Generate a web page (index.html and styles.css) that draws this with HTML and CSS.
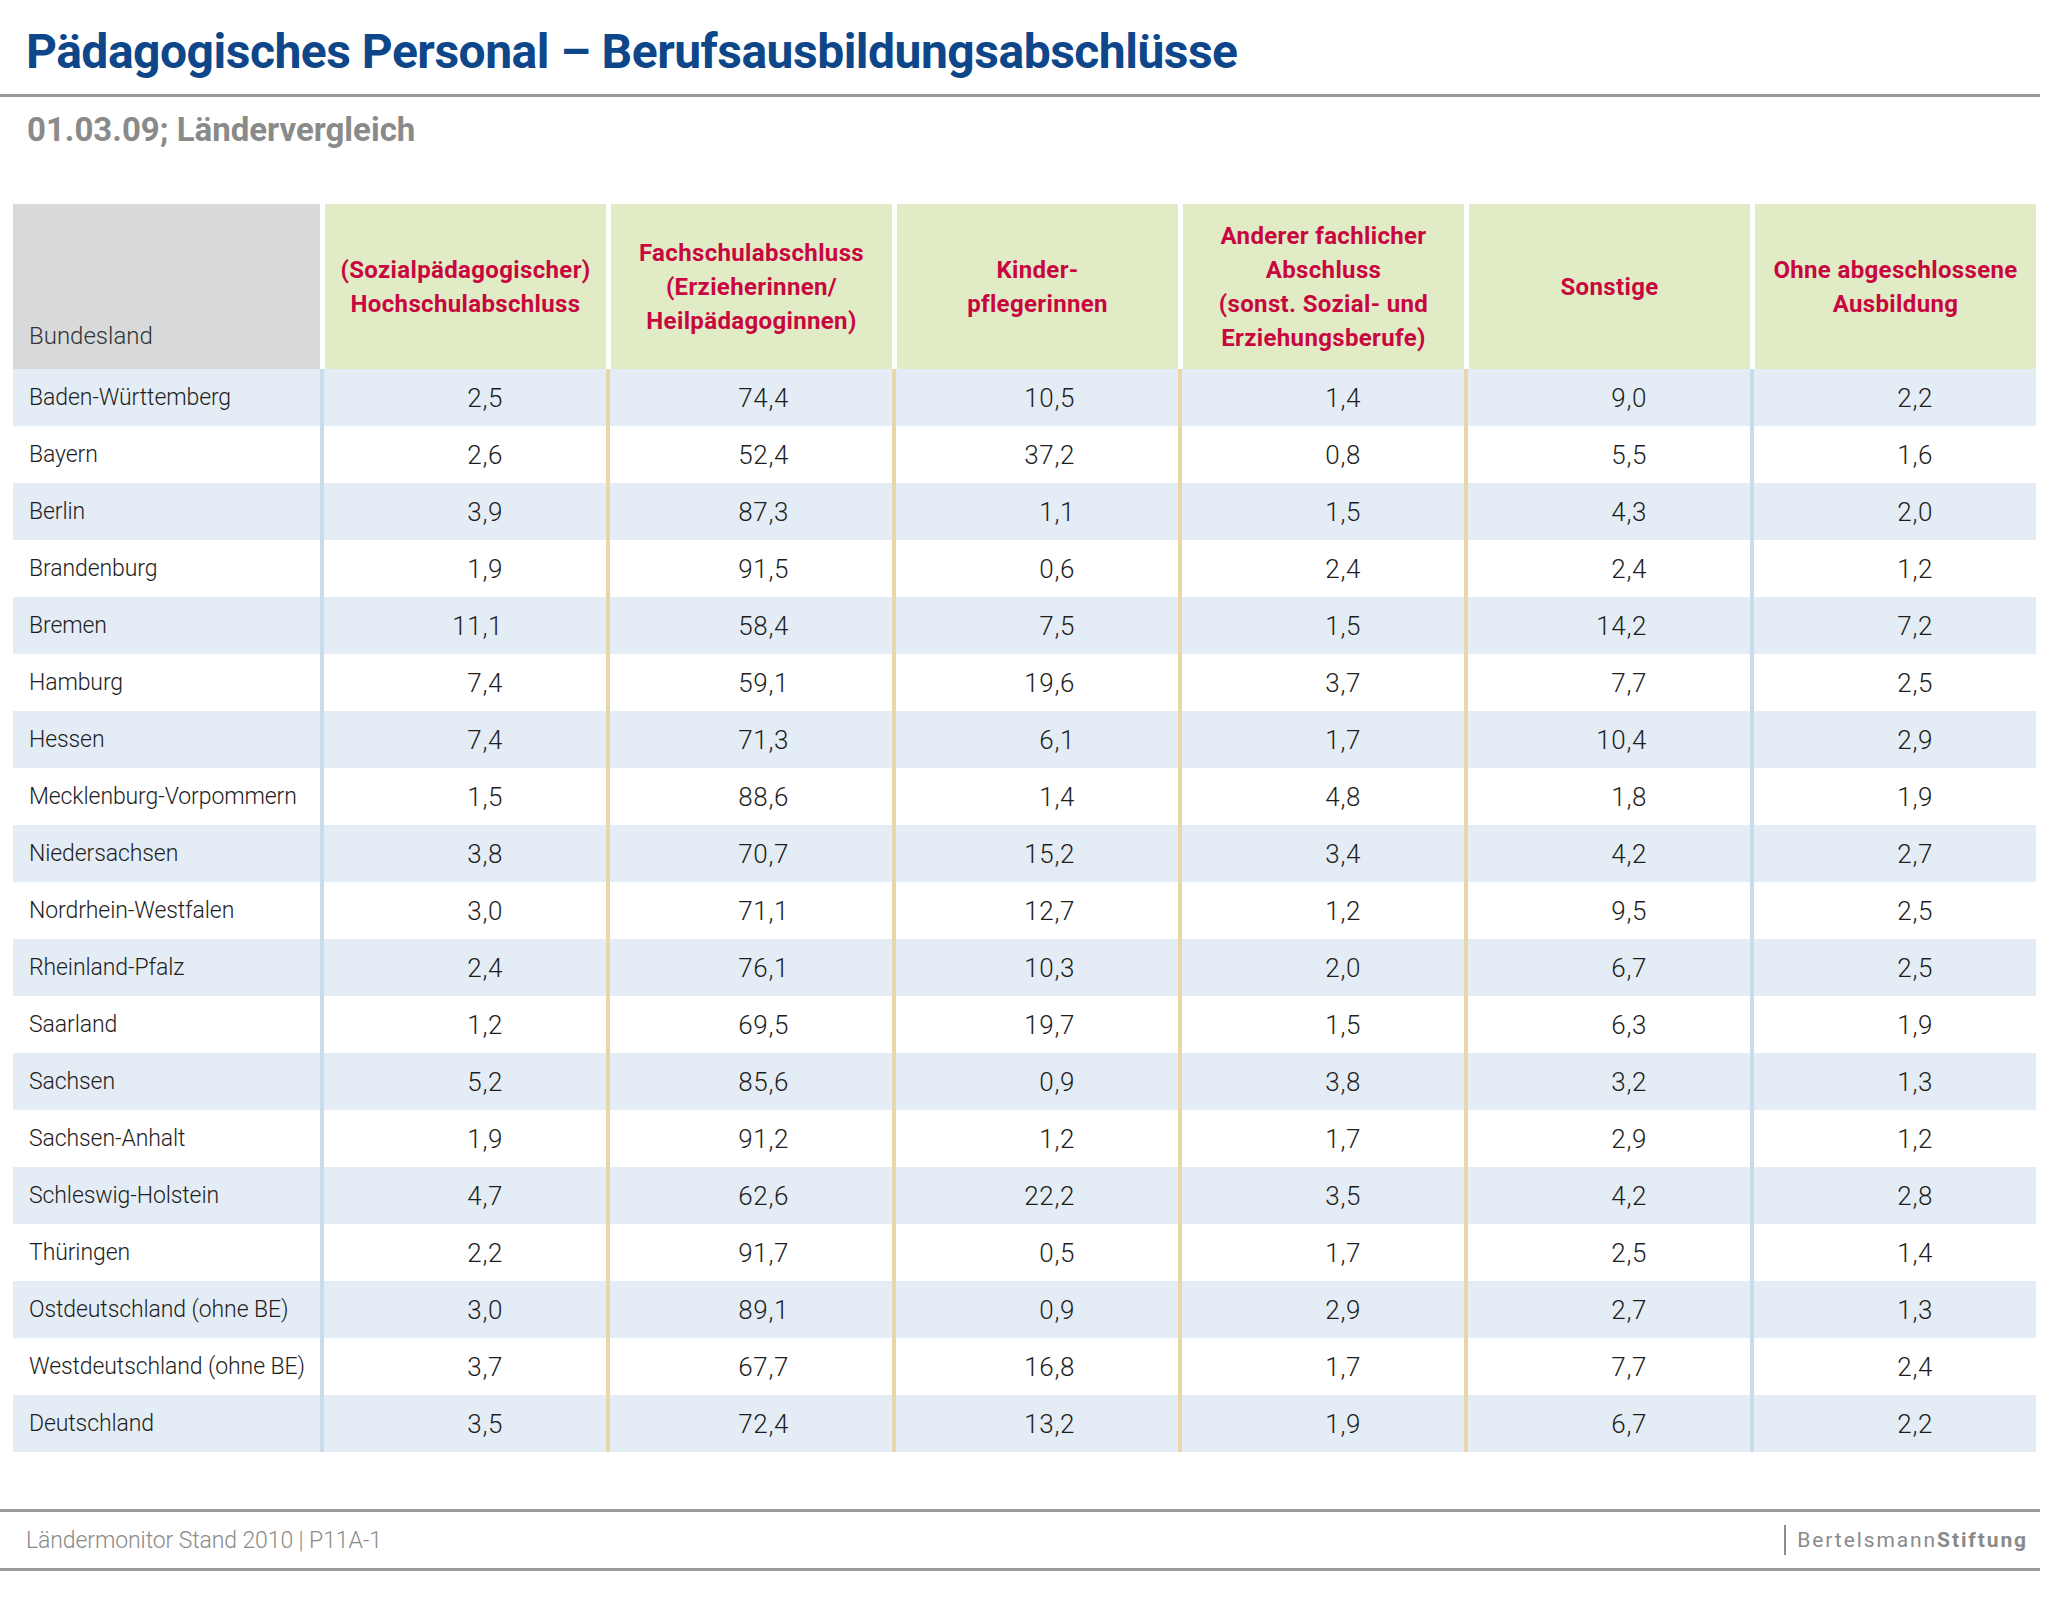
FILE: index.html
```html
<!DOCTYPE html>
<html lang="de">
<head>
<meta charset="utf-8">
<title>Pädagogisches Personal – Berufsausbildungsabschlüsse</title>
<link rel="stylesheet" href="styles.css">
</head>
<body>
<div class="page">
  <header class="head">
    <h1 class="title">Pädagogisches Personal – Berufsausbildungsabschlüsse</h1>
    <div class="rule"></div>
    <p class="subtitle">01.03.09; Ländervergleich</p>
  </header>

  <div class="table">
    <div class="hrow">
      <div class="hcell first"><span>Bundesland</span></div>
      <div class="hcell">(Sozialpädagogischer)<br>Hochschulabschluss</div>
      <div class="hcell">Fachschulabschluss<br>(Erzieherinnen/<br>Heilpädagoginnen)</div>
      <div class="hcell">Kinder-<br>pflegerinnen</div>
      <div class="hcell">Anderer fachlicher<br>Abschluss<br>(sonst. Sozial- und<br>Erziehungsberufe)</div>
      <div class="hcell">Sonstige</div>
      <div class="hcell">Ohne abgeschlossene<br>Ausbildung</div>
    </div>
    <div class="rows" id="rows">
      <div class="row"><div class="lbl">Baden-Württemberg</div><div class="num b">2,5</div><div class="num t">74,4</div><div class="num t">10,5</div><div class="num t">1,4</div><div class="num t">9,0</div><div class="num b">2,2</div></div>
      <div class="row"><div class="lbl">Bayern</div><div class="num b">2,6</div><div class="num t">52,4</div><div class="num t">37,2</div><div class="num t">0,8</div><div class="num t">5,5</div><div class="num b">1,6</div></div>
      <div class="row"><div class="lbl">Berlin</div><div class="num b">3,9</div><div class="num t">87,3</div><div class="num t">1,1</div><div class="num t">1,5</div><div class="num t">4,3</div><div class="num b">2,0</div></div>
      <div class="row"><div class="lbl">Brandenburg</div><div class="num b">1,9</div><div class="num t">91,5</div><div class="num t">0,6</div><div class="num t">2,4</div><div class="num t">2,4</div><div class="num b">1,2</div></div>
      <div class="row"><div class="lbl">Bremen</div><div class="num b">11,1</div><div class="num t">58,4</div><div class="num t">7,5</div><div class="num t">1,5</div><div class="num t">14,2</div><div class="num b">7,2</div></div>
      <div class="row"><div class="lbl">Hamburg</div><div class="num b">7,4</div><div class="num t">59,1</div><div class="num t">19,6</div><div class="num t">3,7</div><div class="num t">7,7</div><div class="num b">2,5</div></div>
      <div class="row"><div class="lbl">Hessen</div><div class="num b">7,4</div><div class="num t">71,3</div><div class="num t">6,1</div><div class="num t">1,7</div><div class="num t">10,4</div><div class="num b">2,9</div></div>
      <div class="row"><div class="lbl">Mecklenburg-Vorpommern</div><div class="num b">1,5</div><div class="num t">88,6</div><div class="num t">1,4</div><div class="num t">4,8</div><div class="num t">1,8</div><div class="num b">1,9</div></div>
      <div class="row"><div class="lbl">Niedersachsen</div><div class="num b">3,8</div><div class="num t">70,7</div><div class="num t">15,2</div><div class="num t">3,4</div><div class="num t">4,2</div><div class="num b">2,7</div></div>
      <div class="row"><div class="lbl">Nordrhein-Westfalen</div><div class="num b">3,0</div><div class="num t">71,1</div><div class="num t">12,7</div><div class="num t">1,2</div><div class="num t">9,5</div><div class="num b">2,5</div></div>
      <div class="row"><div class="lbl">Rheinland-Pfalz</div><div class="num b">2,4</div><div class="num t">76,1</div><div class="num t">10,3</div><div class="num t">2,0</div><div class="num t">6,7</div><div class="num b">2,5</div></div>
      <div class="row"><div class="lbl">Saarland</div><div class="num b">1,2</div><div class="num t">69,5</div><div class="num t">19,7</div><div class="num t">1,5</div><div class="num t">6,3</div><div class="num b">1,9</div></div>
      <div class="row"><div class="lbl">Sachsen</div><div class="num b">5,2</div><div class="num t">85,6</div><div class="num t">0,9</div><div class="num t">3,8</div><div class="num t">3,2</div><div class="num b">1,3</div></div>
      <div class="row"><div class="lbl">Sachsen-Anhalt</div><div class="num b">1,9</div><div class="num t">91,2</div><div class="num t">1,2</div><div class="num t">1,7</div><div class="num t">2,9</div><div class="num b">1,2</div></div>
      <div class="row"><div class="lbl">Schleswig-Holstein</div><div class="num b">4,7</div><div class="num t">62,6</div><div class="num t">22,2</div><div class="num t">3,5</div><div class="num t">4,2</div><div class="num b">2,8</div></div>
      <div class="row"><div class="lbl">Thüringen</div><div class="num b">2,2</div><div class="num t">91,7</div><div class="num t">0,5</div><div class="num t">1,7</div><div class="num t">2,5</div><div class="num b">1,4</div></div>
      <div class="row"><div class="lbl">Ostdeutschland (ohne BE)</div><div class="num b">3,0</div><div class="num t">89,1</div><div class="num t">0,9</div><div class="num t">2,9</div><div class="num t">2,7</div><div class="num b">1,3</div></div>
      <div class="row"><div class="lbl">Westdeutschland (ohne BE)</div><div class="num b">3,7</div><div class="num t">67,7</div><div class="num t">16,8</div><div class="num t">1,7</div><div class="num t">7,7</div><div class="num b">2,4</div></div>
      <div class="row"><div class="lbl">Deutschland</div><div class="num b">3,5</div><div class="num t">72,4</div><div class="num t">13,2</div><div class="num t">1,9</div><div class="num t">6,7</div><div class="num b">2,2</div></div>
    </div>
  </div>

  <footer class="foot">
    <span class="source">Ländermonitor Stand 2010 | P11A-1</span>
    <span class="logo"><span class="bar"></span><span class="brand">Bertelsmann<b>Stiftung</b></span></span>
  </footer>
</div>
</body>
</html>
```

FILE: styles.css
```css
* { box-sizing: border-box; }

html, body {
  margin: 0;
  padding: 0;
  background: #ffffff;
}

body {
  font-family: Roboto, "Liberation Sans", sans-serif;
  color: #222;
}

.page {
  width: 2067px;
  height: 1600px;
}

.head {
  padding-top: 24px;
}

.title {
  margin: 0 0 0 26px;
  font-size: 48px;
  line-height: 56px;
  font-weight: 700;
  letter-spacing: -0.5px;
  color: #0d4789;
}

.rule {
  width: 2040px;
  height: 3px;
  margin-top: 14px;
  background: #999;
}

.subtitle {
  margin: 14px 0 0 27px;
  font-size: 33px;
  line-height: 38px;
  font-weight: 700;
  letter-spacing: 0;
  color: #8a8a8a;
}

.table {
  margin: 55px 0 0 13px;
  width: 2023px;
}

.hrow {
  display: flex;
  height: 165px;
}

.hcell {
  width: 286px;
  border-left: 5px solid #fff;
  background: #e1ebc6;
  display: flex;
  align-items: center;
  justify-content: center;
  text-align: center;
  font-size: 24px;
  line-height: 34px;
  font-weight: 700;
  letter-spacing: 0.35px;
  color: #c8073f;
}

.hcell.first {
  width: 307px;
  border-left: 0;
  background: #d8d9db;
  justify-content: flex-start;
  align-items: flex-end;
  padding: 0 0 18px 16px;
  font-size: 24px;
  line-height: 30px;
  font-weight: 300;
  letter-spacing: 0;
  color: #333;
  text-align: left;
}

.row {
  display: flex;
  height: 57px;
  align-items: stretch;
}

.row:nth-child(odd) {
  background: #e4edf5;
}

.lbl {
  width: 307px;
  padding-left: 16px;
  display: flex;
  align-items: center;
  font-size: 23px;
  font-weight: 300;
  letter-spacing: -0.1px;
  color: #1e1e1e;
}

.num {
  width: 286px;
  border-left: 4px solid #e9d6a9;
  padding-right: 103px;
  display: flex;
  align-items: center;
  justify-content: flex-end;
  font-size: 26px;
  font-weight: 300;
  letter-spacing: 0.6px;
  color: #1e1e1e;
}

.num.b {
  border-left-color: #c8dce9;
}

.foot {
  margin-top: 57px;
  width: 2040px;
  height: 62px;
  border-top: 3px solid #999;
  border-bottom: 3px solid #999;
  display: flex;
  align-items: center;
  justify-content: space-between;
  padding: 0 12px 0 26px;
}

.source {
  font-size: 23px;
  font-weight: 300;
  color: #8a8a8a;
  letter-spacing: -0.1px;
}

.logo {
  display: flex;
  align-items: center;
  gap: 11px;
}

.bar {
  width: 2px;
  height: 30px;
  background: #8d8d8d;
}

.brand {
  font-size: 21px;
  letter-spacing: 1.9px;
  color: #8a8a8a;
  font-weight: 400;
}

.brand b {
  font-weight: 700;
}
```
